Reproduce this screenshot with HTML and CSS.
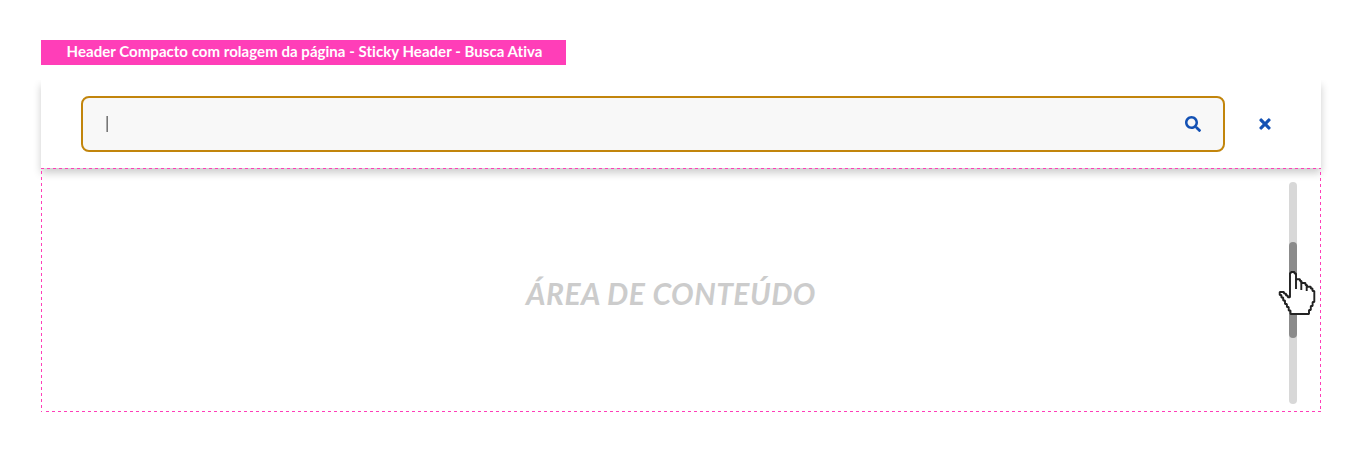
FILE: index.html
```html
<!DOCTYPE html>
<html lang="pt-BR">
<head>
<meta charset="utf-8">
<title>Sticky Header - Busca Ativa</title>
<link rel="stylesheet" href="styles.css">
</head>
<body>
<main class="page">
  <h1 class="label"><span class="label-text">Header Compacto com rolagem da página - Sticky Header - Busca Ativa</span></h1>
  <header class="header">
    <div class="search">
      <span class="caret"></span>
      <svg class="search-icon" viewBox="0 0 512 512"><path d="M505 442.700 405.300 343c-4.500-4.500-10.600-7-17-7H372c27.600-35.300 44-79.700 44-128C416 93.100 322.900 0 208 0S0 93.100 0 208s93.100 208 208 208c48.300 0 92.700-16.400 128-44v16.300c0 6.400 2.500 12.500 7 17l99.700 99.700c9.400 9.400 24.600 9.400 33.900 0l28.300-28.300c9.400-9.400 9.400-24.600.1-34zM208 336c-70.700 0-128-57.200-128-128 0-70.700 57.200-128 128-128 70.700 0 128 57.200 128 128 0 70.700-57.200 128-128 128z"/></svg>
    </div>
    <svg class="close-icon" viewBox="0 0 352 512"><path d="m242.700 256 100.100-100.100c12.300-12.300 12.300-32.200 0-44.500l-22.200-22.200c-12.300-12.300-32.200-12.300-44.500 0L176 189.300 75.900 89.200c-12.300-12.300-32.200-12.300-44.500 0L9.200 111.500c-12.300 12.300-12.300 32.200 0 44.500L109.300 256 9.200 356.100c-12.300 12.300-12.300 32.200 0 44.500l22.200 22.200c12.300 12.300 32.200 12.300 44.500 0L176 322.700l100.100 100.100c12.300 12.300 32.200 12.300 44.500 0l22.200-22.200c12.300-12.300 12.300-32.200 0-44.500z"/></svg>
  </header>
  <section class="content">
    <svg class="frame" viewBox="0 0 1280 244">
      <g stroke-dasharray="3 3">
        <path d="M0 .5H1280"/><path d="M.5 3V244"/><path d="M1279.500 4V244"/><path d="M5 243.500H1280"/>
      </g>
    </svg>
    <p class="content-title">ÁREA DE CONTEÚDO</p>
    <div class="scrollbar">
      <div class="thumb"></div>
      <svg class="cursor" viewBox="0 0 38 46"><path d="M13 3V2H16.500V3.500H18V9.300H22V11H23.500V13H27.500V15H29V16.800H32.800V18.500H34.500V21H36.300V32H34.600V36H32.800V40H31V44H12.500V40.500H10.700V37H8.900V34H7V30.500H5.200V27.500H3.400V25H1.700V22H6V23.600H8V25.500H9.800V27.300H12V3Z"/><path d="M18 9V19M23.300 12V20M28.700 15V21"/></svg>
    </div>
  </section>
</main>
</body>
</html>
```
FILE: styles.css
```css
body { margin: 0; background: #fff; }
.page { width: 1280px; padding: 40px 0 0 41px; }
.label { display: flex; justify-content: center; align-items: center; box-sizing: border-box; width: 525px; height: 25px; margin: 0 0 15px; padding: 0 0 2px 2px; background: #ff3eb8; }
.label-text { color: #fff; font: 700 15px/23px Lato, sans-serif; letter-spacing: 0.04px; white-space: nowrap; }
.header { position: relative; display: flex; align-items: center; box-sizing: border-box; height: 88px; padding: 0 50px 0 40px; background: #fff; box-shadow: 0 5px 8px rgba(0, 0, 0, 0.2); clip-path: inset(0 -14px -18px); }
.search { display: flex; align-items: center; justify-content: space-between; box-sizing: border-box; width: 1144px; height: 56px; padding: 0 22px 0 23px; border: 2px solid #c2850c; border-radius: 8px; background: #f8f8f8; }
.caret { width: 2px; height: 16px; background: linear-gradient(90deg, #aaa 50%, #777 50%); }
.search-icon { width: 16px; height: 16px; fill: #1351b4; }
.close-icon { width: 12px; height: 16px; margin-left: 34px; fill: #1351b4; stroke: #1351b4; stroke-width: 12; }
.content { position: relative; display: flex; justify-content: flex-end; height: 244px; }
.frame { position: absolute; z-index: 1; inset: 0; width: 1280px; height: 244px; fill: none; stroke: #ff3eb8; }
.content-title { flex: 1; margin: 103px 0 0 485px; color: #ccc; font: italic 700 30px/44px Lato, sans-serif; letter-spacing: 0.48px; white-space: nowrap; }
.scrollbar { position: relative; z-index: 2; width: 8px; height: 222px; margin: 14px 24px 0 0; border-radius: 4px; background: #d8d8d8; }
.thumb { width: 8px; height: 96px; margin-top: 60px; border-radius: 4px; background: #8b8b8b; }
.cursor { position: absolute; left: -11px; top: 88px; width: 38px; height: 46px; fill: #fff; stroke: #222; stroke-width: 1.9; stroke-linejoin: bevel; }
```
